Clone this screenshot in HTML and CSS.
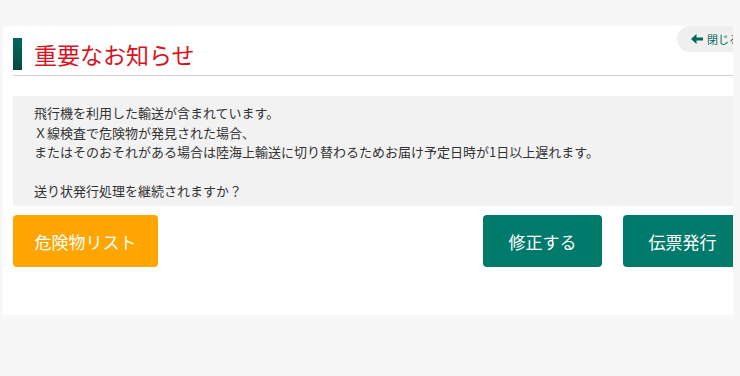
FILE: index.html
```html
<!DOCTYPE html>
<html lang="ja">
<head>
    <meta charset="UTF-8">
    <meta name="viewport" content="width=device-width, initial-scale=1.0">
    <title>重要なお知らせ</title>
    <link rel="stylesheet" href="styles.css">
</head>
<body>
    <div class="panel">
        <div class="panel-inner">
            <button class="close-button">
                <svg width="13" height="10" viewBox="0 0 13 10"><path d="M0 5 L5.5 0 L5.5 3.5 L12 3.5 L12 6.5 L5.5 6.5 L5.5 10 Z" fill="#00695c"/></svg>
                <span>閉じる</span>
            </button>
            <div class="title-row">
                <span class="title-bar"></span>
                <h1>重要なお知らせ</h1>
            </div>
            <div class="message-box">
                飛行機を利用した輸送が含まれています。<br>
                Ｘ線検査で危険物が発見された場合、<br>
                またはそのおそれがある場合は陸海上輸送に切り替わるためお届け予定日時が1日以上遅れます。<br>
                <br>
                送り状発行処理を継続されますか？
            </div>
            <div class="button-row">
                <button class="btn btn-orange">危険物リスト</button>
                <div class="right-buttons">
                    <button class="btn btn-green">修正する</button>
                    <button class="btn btn-green">伝票発行</button>
                </div>
            </div>
        </div>
    </div>
</body>
</html>
```

FILE: styles.css
```css
body {
    margin: 0;
    padding: 0;
    background-color: #f7f7f7;
    font-family: "Noto Sans CJK JP", "Noto Sans", sans-serif;
}

.panel {
    margin: 26px 0 0 3px;
    width: 730px;
    height: 289px;
    background: white;
    overflow: hidden;
}

.panel-inner {
    position: relative;
    width: 729px;
    padding: 12px 0 0 10px;
}

.close-button {
    position: absolute;
    top: 0;
    left: 674px;
    height: 26px;
    width: 90px;
    border: none;
    border-radius: 13px;
    background-color: #efefef;
    display: flex;
    align-items: center;
    gap: 3px;
    padding: 0 0 0 14px;
    font-family: "Noto Sans CJK JP", sans-serif;
    font-size: 11px;
    color: #00695c;
}

.title-row {
    display: flex;
    align-items: center;
    gap: 12px;
    height: 32px;
    padding-bottom: 5px;
    border-bottom: 1px solid #cfcfcf;
}

.title-bar {
    width: 9px;
    height: 32px;
    background: linear-gradient(#00695c, #004d40);
}

h1 {
    margin: 0;
    font-size: 23px;
    font-weight: normal;
    color: #d7141e;
    line-height: 32px;
}

.message-box {
    margin-top: 20px;
    background-color: #f2f2f2;
    padding: 7px 0 7px 21px;
    height: 96px;
    font-size: 13px;
    line-height: 19.5px;
    color: #333;
}

.button-row {
    display: flex;
    justify-content: space-between;
    margin-top: 9px;
}

.right-buttons {
    display: flex;
    gap: 21px;
}

.btn {
    height: 52px;
    border: none;
    border-radius: 4px;
    color: white;
    font-family: "Noto Sans CJK JP", sans-serif;
    font-size: 17px;
}

.btn-orange {
    width: 145px;
    background-color: #ffa500;
}

.btn-green {
    width: 119px;
    background-color: #007a6a;
}
```
